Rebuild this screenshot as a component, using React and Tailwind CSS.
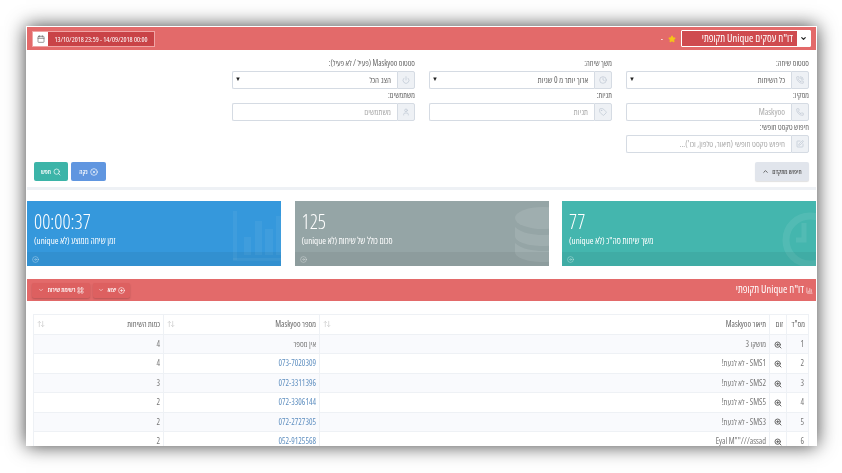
import { Calendar, Star, Phone, Clock, Tag, User, SquarePen, Search, CircleX, ChevronUp, ChevronDown, CirclePlus, LayoutGrid, CircleArrowRight, ArrowUpDown, PhoneCall, Power, ZoomIn, BarChart3 } from 'lucide-react';

const rows = [
  { id: 1, name: 'מושקו 3', number: 'אין מספר', count: 4 },
  { id: 2, name: 'SMS1 - לא לגעת!', number: '073-7020309', count: 4 },
  { id: 3, name: 'SMS2 - לא לגעת!', number: '072-3311396', count: 3 },
  { id: 4, name: 'SMS5 - לא לגעת!', number: '072-3306144', count: 2 },
  { id: 5, name: 'SMS3 - לא לגעת!', number: '072-2727305', count: 2 },
  { id: 6, name: 'Eyal M""///assad', number: '052-9125568', count: 2 },
];

const Field = ({ label, icon: Icon, value, placeholder, select }) => (
  <div className="h-[32px]">
    <label className="block h-[14px] text-[8px] leading-[12px] text-[#666]">{label}</label>
    <div className="flex h-[18px]">
      <span className="w-[18px] shrink-0 flex items-center justify-center bg-[#eef1f5] border border-[#d5dbe3] rounded-r-[2px]">
        <Icon className="w-[8px] h-[8px] text-[#bcc6d2]" />
      </span>
      {select ? (
        <div className="flex-1 flex items-center justify-between pr-[6px] pl-[2px] border border-r-0 border-[#d5dbe3] rounded-l-[2px] bg-white text-[8.5px] text-[#666]">
          <span>{value}</span>
          <span className="text-[6px] text-[#222] -mt-[2px]">▼</span>
        </div>
      ) : (
        <input
          readOnly
          placeholder={placeholder}
          className="flex-1 min-w-0 px-[6px] border border-r-0 border-[#d5dbe3] rounded-l-[2px] bg-white text-[8.5px] placeholder:text-[#aaa] outline-none"
        />
      )}
    </div>
  </div>
);

const StatCard = ({ color, value, title, children }) => (
  <div className={`relative w-[254px] h-[65px] overflow-hidden text-white ${color}`}>
    <div className="absolute inset-y-0 right-0">{children}</div>
    <div dir="ltr" className="h-[51px] pl-[7px] pt-[10px]">
      <div className="text-[20px] leading-[22px] font-light">{value}</div>
      <div dir="rtl" className="text-[9px] leading-[12px] mt-[2px] text-left">{title}</div>
    </div>
    <div dir="ltr" className="relative h-[14px] bg-black/5 pl-[5px] flex items-center">
      <CircleArrowRight className="w-[7px] h-[7px] text-white/50" />
    </div>
  </div>
);

const RedButton = ({ icon: Icon, label, w }) => (
  <button className={`h-[15px] flex items-center justify-center gap-[2px] rounded-[2px] bg-[#dd6060] shadow-[0_1px_2px_rgba(0,0,0,0.2)] text-white text-[6.5px] font-semibold whitespace-nowrap ${w}`}>
    <Icon className="w-[7px] h-[7px]" />
    <span>{label}</span>
    <ChevronDown className="w-[6px] h-[6px] mr-[2px]" />
  </button>
);

const Th = ({ children, sort, className = '' }) => (
  <th className={`border border-[#eef1f5] px-[3px] text-right text-[8.2px] font-medium text-[#666] ${className}`}>
    <div className="flex items-center justify-between whitespace-nowrap">
      <span>{children}</span>
      {sort && <ArrowUpDown className="w-[8px] h-[8px] text-[#ccc]" />}
    </div>
  </th>
);

export default function App() {
  return (
    <div className="w-[842px] h-[473px] bg-white pt-[26px] pl-[26px] overflow-hidden font-['Open_Sans','Liberation_Sans',sans-serif] [font-stretch:75%] blur-[0.45px]">
      <div dir="rtl" className="w-[791px] h-[420px] bg-white p-px overflow-hidden shadow-[0_0_18px_rgba(0,0,0,0.75)]">
        <header className="h-[23px] bg-[#e36a6a] flex items-center justify-between pr-[5px] pl-[5px]">
          <div className="flex items-center gap-[5px]">
            <div className="w-[130px] h-[17px] flex border border-white rounded-[1px]">
              <span className="w-[13px] bg-white flex items-center justify-center text-[#222]">
                <ChevronDown className="w-[7px] h-[7px]" strokeWidth={4} />
              </span>
              <span className="flex-1 bg-[#cf4b4f] text-white text-[10.5px] leading-[15px] pr-[4px] whitespace-nowrap">דו"ח עסקים Unique תקופתי</span>
            </div>
            <Star className="w-[8px] h-[8px] text-[#f5c518] fill-[#f5c518]" />
            <span className="text-white text-[8px]">-</span>
          </div>
          <div dir="ltr" className="flex h-[16px] w-[123px] border border-[#f0a5a5]">
            <span className="w-[15px] bg-white flex items-center justify-center">
              <Calendar className="w-[8px] h-[8px] text-[#666]" />
            </span>
            <span className="flex-1 bg-[#c94347] text-white text-[7.1px] leading-[14px] text-center whitespace-nowrap">13/10/2018 23:59 - 14/09/2018 00:00</span>
          </div>
        </header>

        <section className="h-[137px] px-[7px] pt-[7px]">
          <div className="grid grid-cols-[183px_183px_183px] gap-x-[14px]">
            <Field label="סטטוס שיחה:" icon={PhoneCall} value="כל השיחות" select />
            <Field label="משך שיחה:" icon={Clock} value="ארוך יותר מ 0 שניות" select />
            <Field label="סטטוס Maskyoo (פעיל / לא פעיל):" icon={Power} value="הצג הכל" select />
            <Field label="מסקיו:" icon={Phone} placeholder="Maskyoo" />
            <Field label="תגיות:" icon={Tag} placeholder="תגיות" />
            <Field label="משתמשים:" icon={User} placeholder="משתמשים" />
            <Field label="חיפוש טקסט חופשי:" icon={SquarePen} placeholder="חיפוש טקסט חופשי (תיאור, טלפון, וכו')..." />
          </div>
          <div className="flex justify-between mt-[9px]">
            <button className="w-[54px] h-[19px] rounded-[2px] bg-[#e1e5ec] text-[#555] text-[6.5px] font-semibold flex items-center justify-center gap-[3px] whitespace-nowrap shadow-[0_1px_1px_rgba(0,0,0,0.12)]">
              <span>חיפוש מתקדם</span>
              <ChevronUp className="w-[7px] h-[7px]" strokeWidth={3} />
            </button>
            <div className="flex gap-[3px]">
              <button className="w-[35px] h-[19px] rounded-[2px] bg-[#6096e0] text-white text-[6.5px] font-semibold flex items-center justify-center gap-[2px]">
                <CircleX className="w-[8px] h-[8px]" />
                <span>נקה</span>
              </button>
              <button className="w-[34px] h-[19px] rounded-[2px] bg-[#3cb4a8] text-white text-[6.5px] font-semibold flex items-center justify-center gap-[2px]">
                <Search className="w-[8px] h-[8px]" />
                <span>חפש</span>
              </button>
            </div>
          </div>
        </section>
        <div className="h-[3px] bg-[#eef1f5]" />

        <section className="flex justify-between mt-[11px]">
          <StatCard color="bg-[#44b6ae]" value="77" title='משך שיחות סה"כ (לא unique)'>
            <svg width="34" height="65" viewBox="0 0 34 65" fill="none" stroke="#fff" strokeOpacity="0.08">
              <circle cx="28" cy="39" r="24" strokeWidth="7" />
              <path d="M22 22v17h-8" strokeWidth="5" />
            </svg>
          </StatCard>
          <StatCard color="bg-[#95a5a6]" value="125" title="סכום כולל של שיחות (לא unique)">
            <svg width="34" height="65" viewBox="0 0 34 65" fill="#fff" fillOpacity="0.1">
              <ellipse cx="28" cy="17" rx="28" ry="11" />
              <path d="M0 26c6 6 18 8 28 8s18-2 28-8v9c0 6-13 10-28 10S0 41 0 35z" />
              <path d="M0 42c6 6 18 8 28 8s18-2 28-8v9c0 6-13 10-28 10S0 57 0 51z" />
            </svg>
          </StatCard>
          <StatCard color="bg-[#3598dc]" value="00:00:37" title="זמן שיחה ממוצע (לא unique)">
            <svg width="48" height="65" viewBox="0 0 48 65" fill="#fff" fillOpacity="0.05">
              <rect x="0" y="10" width="4" height="49" />
              <rect x="11" y="36" width="7" height="18" />
              <rect x="22" y="20" width="7" height="34" />
              <rect x="32" y="28" width="8" height="26" />
              <rect x="43" y="15" width="5" height="39" />
              <rect x="0" y="57" width="48" height="3" />
            </svg>
          </StatCard>
        </section>

        <section className="h-[22px] mt-[13px] bg-[#e36a6a] flex items-center justify-between pr-[3px] pl-[5px]">
          <div className="flex items-center gap-[2px] text-white text-[10.5px]">
            <BarChart3 className="w-[7px] h-[7px]" />
            <span>דו"ח Unique תקופתי</span>
          </div>
          <div className="flex flex-row-reverse gap-[3px]">
            <RedButton icon={LayoutGrid} label="רשימת שירות" w="w-[58px]" />
            <RedButton icon={CirclePlus} label="יצוא" w="w-[37px]" />
          </div>
        </section>

        <div className="px-[7px] mt-[13px]">
          <table className="w-[775px] table-fixed border-collapse">
            <colgroup>
              <col className="w-[22px]" />
              <col className="w-[17px]" />
              <col className="w-[450px]" />
              <col className="w-[156px]" />
              <col className="w-[130px]" />
            </colgroup>
            <thead>
              <tr className="h-[20px]">
                <Th>מס"ד</Th>
                <Th>זום</Th>
                <Th sort>תיאור Maskyoo</Th>
                <Th sort>מספר Maskyoo</Th>
                <Th sort>כמות השיחות</Th>
              </tr>
            </thead>
            <tbody>
              {rows.map((row) => (
                <tr key={row.id} className={`h-[19.4px] text-[8.3px] text-[#777] ${row.id % 2 ? 'bg-[#f9fafd]' : 'bg-white'}`}>
                  <td className="border border-[#eef1f5] px-[4px] text-right">{row.id}</td>
                  <td className="border border-[#eef1f5] text-center">
                    <ZoomIn className="w-[8px] h-[8px] inline-block text-[#666]" strokeWidth={3} />
                  </td>
                  <td className="border border-[#eef1f5] px-[3px] text-right">{row.name}</td>
                  <td className={`border border-[#eef1f5] px-[3px] text-right ${row.id > 1 ? 'text-[#5f8fc0]' : ''}`}>{row.number}</td>
                  <td className="border border-[#eef1f5] px-[3px] text-right">{row.count}</td>
                </tr>
              ))}
            </tbody>
          </table>
        </div>
      </div>
    </div>
  );
}
